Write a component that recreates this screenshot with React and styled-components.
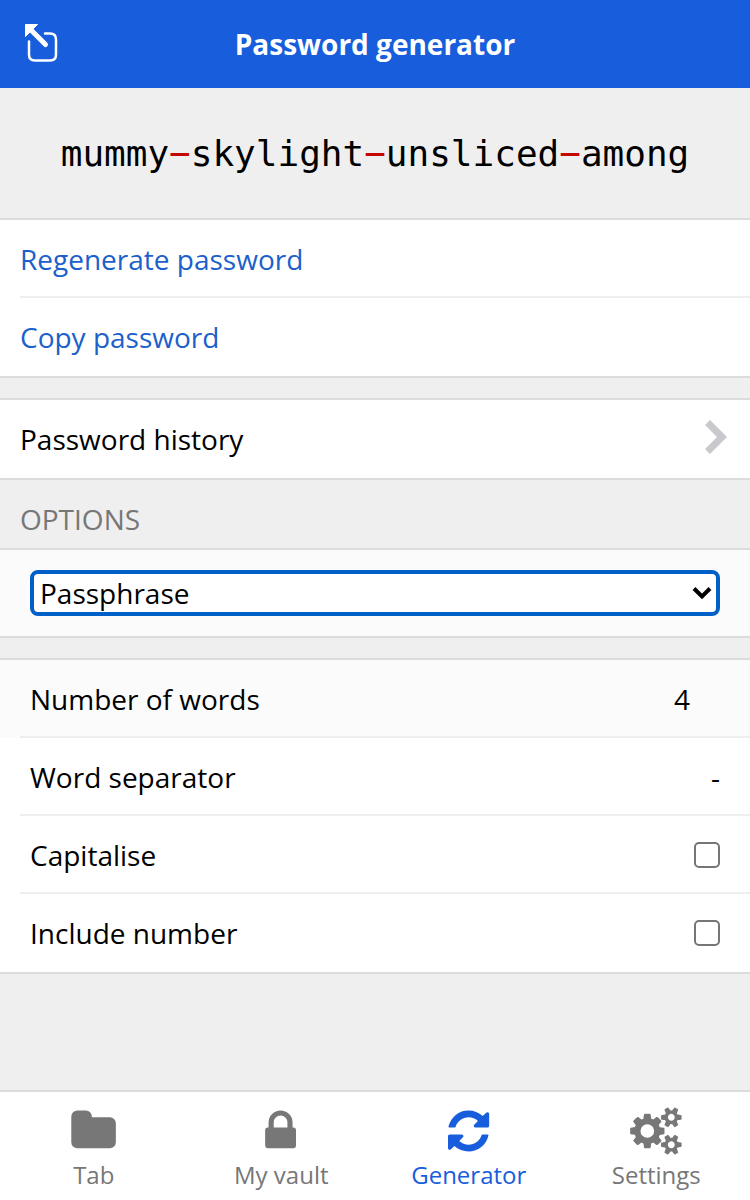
import React, { useState } from 'react'
import styled, { createGlobalStyle } from 'styled-components'

const LOCK = 'M640 768h512v-192q0-106-75-181t-181-75-181 75-75 181v192zm832 96v576q0 40-28 68t-68 28h-960q-40 0-68-28t-28-68v-576q0-40 28-68t68-28h32v-192q0-184 132-316t316-132 316 132 132 316v192h32q40 0 68 28t28 68z'
const FOLDER = 'M1728 608v704q0 92-66 158t-158 66h-1216q-92 0-158-66t-66-158v-960q0-92 66-158t158-66h320q92 0 158 66t66 158v32h672q92 0 158 66t66 158z'
const REFRESH = 'M1639 1056q0 5-1 7-64 268-268 434.5t-478 166.5q-146 0-282.5-55t-243.5-157l-129 129q-19 19-45 19t-45-19-19-45v-448q0-26 19-45t45-19h448q26 0 45 19t19 45-19 45l-137 137q71 66 161 102t187 36q134 0 250-65t186-179q11-17 53-117 8-23 30-23h192q13 0 22.5 9.5t9.5 22.5zm25-800v448q0 26-19 45t-45 19h-448q-26 0-45-19t-19-45 19-45l138-138q-148-137-349-137-134 0-250 65t-186 179q-11 17-53 117-8 23-30 23h-199q-13 0-22.5-9.5t-9.5-22.5v-7q65-268 270-434.5t480-166.5q146 0 284 55.5t245 156.5l130-129q19-19 45-19t45 19 19 45z'
const COG = 'M832 896q0-106-75-181t-181-75-181 75-75 181 75 181 181 75 181-75 75-181zm384-91v185q0 10-7 19.5t-16 10.5l-155 24q-11 35-32 76 34 48 90 115 7 11 7 20 0 12-7 19-23 30-82.5 89.5t-78.5 59.5q-11 0-21-7l-115-90q-37 19-77 31-11 108-23 155-7 24-30 24h-186q-11 0-20-7.5t-10-17.5l-23-153q-34-10-75-31l-118 89q-7 7-20 7-11 0-21-8-144-133-144-160 0-9 7-19 10-14 41-53t47-61q-23-44-35-82l-152-24q-10-1-17-9.5t-7-19.5v-185q0-10 7-19.5t16-10.5l155-24q11-35 32-76-34-48-90-115-7-11-7-20 0-12 7-20 22-30 82-89t79-59q11 0 21 7l115 90q34-18 77-32 11-108 23-154 7-24 30-24h186q11 0 20 7.5t10 17.5l23 153q34 10 75 31l118-89q8-7 20-7 11 0 21 8 144 133 144 160 0 8-7 19-12 16-42 54t-45 60q23 48 34 82l152 23q10 2 17 10.5t7 19.5z'
const SMALL_COG = 'M1600 1408q0-52-38-90t-90-38-90 38-38 90q0 53 37.5 90.5t90.5 37.5 90.5-37.5 37.5-90.5zm256-70v140q0 16-149 31-12 27-30 52 51 113 51 138 0 4-4 7-122 71-124 71-8 0-46-47t-52-68q-20 2-30 2t-30-2q-14 21-52 68t-46 47q-2 0-124-71-4-3-4-7 0-25 51-138-18-25-30-52-149-15-149-31v-140q0-16 149-31 13-29 30-52-51-113-51-138 0-4 4-7 4-2 35-20t59-34 30-16q8 0 46 46.5t52 67.5q20-2 30-2t30 2q51-71 92-112l6-2q4 0 124 70 4 3 4 7 0 25-51 138 17 23 30 52 149 15 149 31z'

const tabs = [
  { id: 'tab', label: 'Tab', icon: <path d={FOLDER} /> },
  { id: 'vault', label: 'My vault', icon: <path d={LOCK} /> },
  { id: 'generator', label: 'Generator', icon: <path d={REFRESH} /> },
  {
    id: 'settings',
    label: 'Settings',
    icon: (
      <>
        <path d={COG} />
        <path d={SMALL_COG} />
        <path d={SMALL_COG} transform='translate(0 -1024)' />
      </>
    )
  }
]

export default () => {
  const [form, setForm] = useState({
    type: 'passphrase',
    words: '4',
    separator: '-',
    capitalise: false,
    includeNumber: false
  })

  const handleChange = (e, field) => {
    const { type, checked, value } = e.target
    setForm({ ...form, [field]: type === 'checkbox' ? checked : value })
  }

  const words = ['mummy', 'skylight', 'unsliced', 'among']

  return (
    <Page>
      <GlobalStyle />
      <Header>
        <PopOutButton type='button' aria-label='Pop out'>
          <svg width='36' height='40' viewBox='0 0 36 40' fill='none'>
            <path
              d='M21 9.500H26Q32 9.500 32 15.500V30.500Q32 36.500 26 36.500H11Q5 36.500 5 30.500V17.500'
              stroke='#fff'
              strokeWidth='2.500'
              strokeLinecap='round'
            />
            <path d='M7 6L21.500 20.500' stroke='#fff' strokeWidth='5' strokeLinecap='round' />
            <path d='M1.500 .5H13.500L1.500 12.500Z' fill='#fff' stroke='#fff' strokeLinejoin='round' />
          </svg>
        </PopOutButton>
        <Title>Password generator</Title>
        <span />
      </Header>

      <Content>
        <Password>
          {words.map((word, i) => (
            <React.Fragment key={word}>
              {i > 0 && <Special>−</Special>}
              {word}
            </React.Fragment>
          ))}
        </Password>

        <Box>
          <ActionRow type='button'>
            <RowBody $link>Regenerate password</RowBody>
          </ActionRow>
          <ActionRow type='button'>
            <RowBody $link>Copy password</RowBody>
          </ActionRow>
        </Box>

        <Box $gap>
          <ActionRow type='button'>
            <RowBody>
              Password history
              <Chevron viewBox='0 0 22 34' aria-hidden='true'>
                <path d='M0 5L5 0L22 17L5 34L0 29L12 17Z' />
              </Chevron>
            </RowBody>
          </ActionRow>
        </Box>

        <BoxHeader>Options</BoxHeader>
        <Box>
          <SelectRow>
            <Select
              aria-label='Password type'
              value={form.type}
              onChange={(e) => handleChange(e, 'type')}
            >
              <option value='password'>Password</option>
              <option value='passphrase'>Passphrase</option>
            </Select>
            <SelectArrow width='20' height='14' viewBox='0 0 20 14' aria-hidden='true'>
              <path d='M2 2.500L10 10.500L18 2.500' fill='none' stroke='#000' strokeWidth='4' />
            </SelectArrow>
          </SelectRow>
        </Box>

        <Box $gap>
          <Row $shaded>
            <RowBody $inset>
              <label htmlFor='words'>Number of words</label>
              <NumberInput
                id='words'
                type='number'
                min='3'
                max='20'
                value={form.words}
                onChange={(e) => handleChange(e, 'words')}
              />
            </RowBody>
          </Row>
          <Row>
            <RowBody $inset>
              <label htmlFor='separator'>Word separator</label>
              <Input
                id='separator'
                type='text'
                maxLength='1'
                value={form.separator}
                onChange={(e) => handleChange(e, 'separator')}
              />
            </RowBody>
          </Row>
          <Row>
            <RowBody $inset>
              <label htmlFor='capitalise'>Capitalise</label>
              <Checkbox
                id='capitalise'
                type='checkbox'
                checked={form.capitalise}
                onChange={(e) => handleChange(e, 'capitalise')}
              />
            </RowBody>
          </Row>
          <Row>
            <RowBody $inset>
              <label htmlFor='include-number'>Include number</label>
              <Checkbox
                id='include-number'
                type='checkbox'
                checked={form.includeNumber}
                onChange={(e) => handleChange(e, 'includeNumber')}
              />
            </RowBody>
          </Row>
        </Box>
      </Content>

      <TabBar>
        {tabs.map(({ id, label, icon }) => (
          <TabLink href={`#${id}`} key={id} $active={id === 'generator'}>
            <TabIcon
              viewBox={id === 'settings' ? '-60 0 1920 1792' : '-48 0 1920 1792'}
              aria-hidden='true'
            >
              {icon}
            </TabIcon>
            {label}
          </TabLink>
        ))}
      </TabBar>
    </Page>
  )
}

const GlobalStyle = createGlobalStyle`
  * {
    box-sizing: border-box;
  }
  body {
    margin: 0;
    background: #efefef;
  }
  body, button, input, select {
    font-family: 'Open Sans', 'Noto Sans', sans-serif;
    font-size: 28px;
    line-height: 38px;
    color: #000;
  }
`
const Page = styled.div`
  display: flex;
  flex-direction: column;
  min-height: 100vh;
`
const Header = styled.header`
  display: grid;
  grid-template-columns: 1fr auto 1fr;
  align-items: center;
  height: 88px;
  padding: 0 24px;
  background: #175ddc;
  color: #fff;
`
const PopOutButton = styled.button`
  display: flex;
  justify-self: start;
  padding: 0;
  border: none;
  background: none;
  cursor: pointer;
`
const Title = styled.h1`
  margin: 0;
  font-size: 28px;
  font-weight: 700;
`
const Content = styled.main`
  flex: 1;
`
const Password = styled.div`
  padding: 41px 20px 39px;
  font-family: 'DejaVu Sans Mono', monospace;
  font-size: 36px;
  line-height: 50px;
  text-align: center;
`
const Special = styled.span`
  color: #c40800;
`
const Box = styled.section`
  margin-top: ${({ $gap }) => ($gap ? 20 : 0)}px;
  border: solid #dcdcdc;
  border-width: 2px 0;
  background: #fff;
`
const BoxHeader = styled.h2`
  margin: 0;
  padding: 20px 20px 10px;
  font-size: 28px;
  font-weight: 400;
  color: #777;
  text-transform: uppercase;
`
const RowBody = styled.div`
  display: flex;
  flex: 1;
  align-items: center;
  justify-content: space-between;
  height: 78px;
  padding: 2px ${({ $inset }) => ($inset ? '30px 0 10px' : '23px 0 0')};
  border-bottom: 2px solid #eee;
  color: ${({ $link }) => ($link ? '#1b60cb' : '#000')};
`
const Row = styled.div`
  display: flex;
  padding-left: 20px;
  background: ${({ $shaded }) => ($shaded ? '#fbfbfb' : '#fff')};

  &:last-child ${RowBody} {
    border-color: transparent;
  }
`
const ActionRow = styled(Row).attrs({ as: 'button' })`
  width: 100%;
  padding: 0 0 0 20px;
  border: none;
  text-align: left;
  cursor: pointer;
`
const Chevron = styled.svg`
  width: 22px;
  height: 34px;
  margin-bottom: 4px;
  fill: #c8c8cd;
`
const SelectRow = styled.div`
  display: grid;
  align-items: center;
  padding: 20px 30px;
  background: #fbfbfb;
`
const Select = styled.select`
  grid-area: 1 / 1;
  width: 100%;
  height: 46px;
  padding: 0 6px;
  border: 4px solid #0060c8;
  border-radius: 8px;
  outline: none;
  appearance: none;
  background: #fff;
`
const SelectArrow = styled.svg`
  grid-area: 1 / 1;
  justify-self: end;
  margin-right: 8px;
  pointer-events: none;
`
const Input = styled.input`
  flex: 1;
  min-width: 0;
  height: 38px;
  padding: 0;
  border: none;
  outline: none;
  background: transparent;
  text-align: right;
`
const NumberInput = styled(Input)`
  padding-right: 30px;
  appearance: textfield;

  &::-webkit-inner-spin-button {
    display: none;
  }
`
const Checkbox = styled.input`
  width: 26px;
  height: 26px;
  margin: 0;
  border: 2px solid #767676;
  border-radius: 5px;
  appearance: none;
  background: #fff;

  &:checked {
    border-color: #175ddc;
    background: #175ddc;
  }
`
const TabBar = styled.nav`
  display: grid;
  grid-template-columns: repeat(4, 1fr);
  height: 110px;
  border-top: 2px solid #dcdcdc;
  background: #fff;
`
const TabLink = styled.a`
  display: flex;
  flex-direction: column;
  align-items: center;
  padding-top: 15px;
  font-size: 24px;
  line-height: 40px;
  text-decoration: none;
  color: ${({ $active }) => ($active ? '#175ddc' : '#777')};
`
const TabIcon = styled.svg`
  width: 52px;
  height: 48px;
  fill: currentColor;
`
